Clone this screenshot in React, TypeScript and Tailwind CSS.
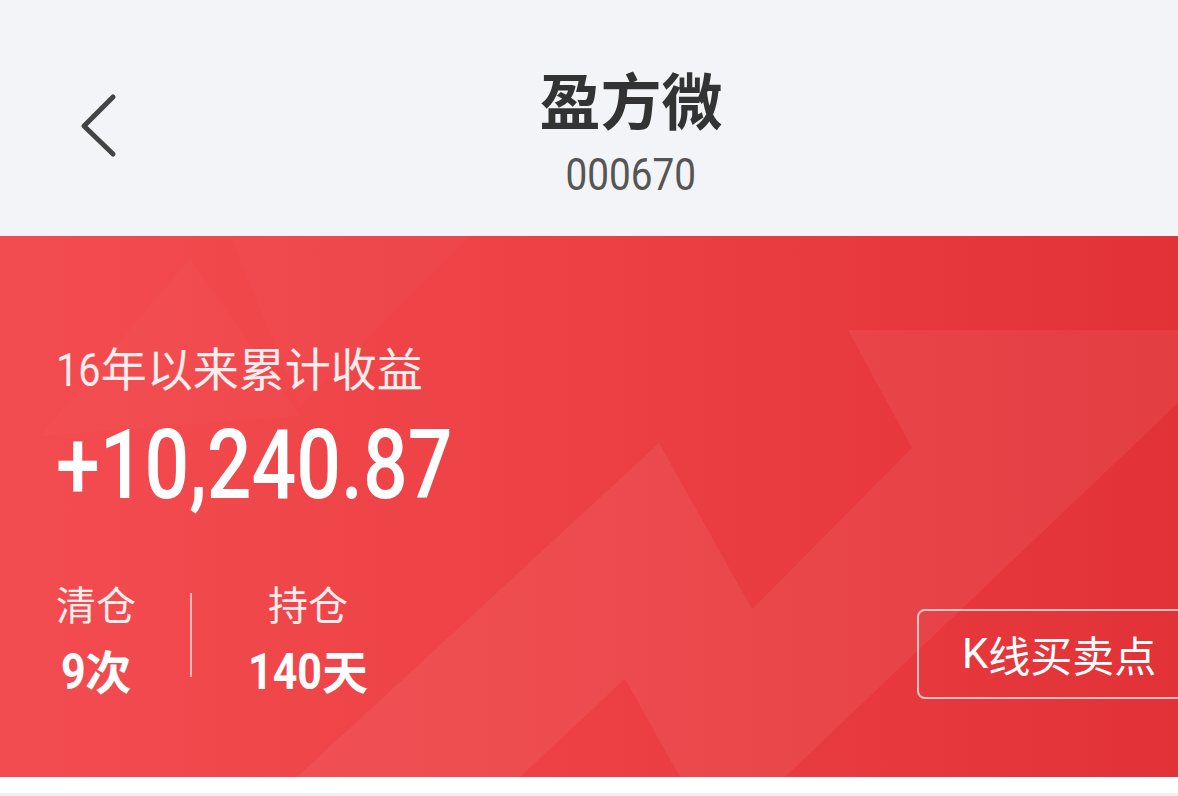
const din = { fontFamily: '"Roboto", "Liberation Sans", sans-serif' };
const cjk = { fontFamily: '"Noto Sans CJK SC", "Noto Sans", sans-serif' };

function BackIcon() {
    return (
        <svg width="44" height="70" viewBox="0 0 44 70" fill="none">
            <polyline points="35,6 6,35 35,63" stroke="#444444" strokeWidth="5" strokeLinecap="round" strokeLinejoin="round" />
        </svg>
    );
}

function Header() {
    return (
        <div className="relative h-[236px] bg-[#f3f4f8] flex flex-col items-center pl-[84px] pt-[63px]">
            <button className="absolute left-[78px] top-[91px]">
                <BackIcon />
            </button>
            <h1 className="text-[61px] leading-[72px] font-bold text-[#333333]" style={cjk}>盈方微</h1>
            <div className="mt-[15px] text-[45px] leading-[50px] text-[#555555] scale-x-[0.86]" style={din}>000670</div>
        </div>
    );
}

// faint zigzag arrow behind the numbers
function Decor() {
    return (
        <svg className="absolute inset-0" width="1178" height="541" viewBox="0 0 1178 541">
            <polygon points="40,200 190,22 300,180" fill="#ffffff" fillOpacity="0.018" />
            <polygon points="230,0 470,0 300,170" fill="#ffffff" fillOpacity="0.02" />
            <polygon
                points="297,541 659,207 752,373 912,212 848,94 1178,94 1178,167 785,541 680,541 625,443 520,541"
                fill="#ffffff"
                fillOpacity="0.06"
            />
        </svg>
    );
}

function Stat({ label, n, unit, nudge }: { label: string; n: string; unit: string; nudge: string }) {
    return (
        <div className="flex flex-col items-center">
            <span className="text-[40px] leading-[48px] text-white/90" style={cjk}>{label}</span>
            <span className="mt-[14px] flex items-baseline leading-[56px] font-bold">
                <span className={"inline-block origin-left scale-x-[0.86] text-[50px] " + nudge} style={din}>{n}</span>
                <span className="text-[46px]" style={cjk}>{unit}</span>
            </span>
        </div>
    );
}

function Banner() {
    return (
        <div className="relative h-[541px] overflow-hidden bg-gradient-to-r from-[#f34c50] via-[#ec4044] to-[#e23237] text-white">
            <Decor />
            <div className="relative flex flex-col pl-[56px] pt-[102px]">
                <div className="text-[46px] leading-[56px] text-white/90" style={cjk}>
                    <span className="inline-block origin-left scale-x-[0.86] mr-[-7px]" style={din}>16</span>年以来累计收益
                </div>
                <div className="mt-[17px] h-[100px]">
                    <span className="inline-block origin-left scale-x-[0.82] text-[96px] leading-[100px] font-medium" style={din}>+10,240.87</span>
                </div>
                <div className="mt-[64px] flex items-start">
                    <div className="w-[80px] flex">
                        <Stat label="清仓" n="9" unit="次" nudge="mr-[-4px]" />
                    </div>
                    <div className="ml-[54px] mt-[14px] w-[2px] h-[84px] bg-white/60" />
                    <div className="ml-[56px]">
                        <Stat label="持仓" n="140" unit="天" nudge="mr-[-12px]" />
                    </div>
                    <div className="ml-auto mr-[-14px] mt-[30px] h-[90px] w-[275px] border-2 border-white/70 rounded-[8px] flex items-center pl-[43px] text-[42px] leading-none" style={cjk}>
                        <span style={din}>K</span>线买卖点
                    </div>
                </div>
            </div>
        </div>
    );
}

export default function App() {
    return (
        <div className="w-[1178px] h-[796px] overflow-hidden bg-white">
            <Header />
            <Banner />
            <div className="h-[16px] bg-white" />
            <div className="h-[3px] bg-[#eeeff3]" />
        </div>
    );
}
